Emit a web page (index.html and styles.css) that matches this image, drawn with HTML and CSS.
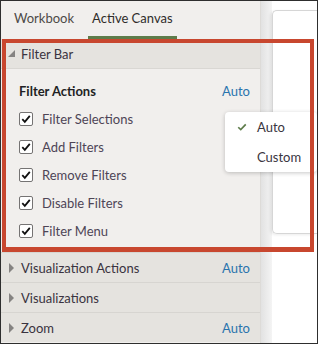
FILE: index.html
```html
<!DOCTYPE html>
<html lang="en">
<head>
  <meta charset="UTF-8" />
  <title>Canvas Properties</title>
  <link rel="stylesheet" href="styles.css">
</head>
<body>
  <div class="frame">
    <aside class="panel">
      <nav class="tabs">
        <span class="tab">Workbook</span>
        <span class="tab active">Active Canvas</span>
      </nav>

      <section class="group">
        <header class="group-head open"><span class="caret"></span>Filter Bar</header>
        <div class="group-body">
          <div class="prop">
            <span class="prop-name">Filter Actions</span>
            <span class="value">Auto</span>
          </div>
          <label class="check"><span class="box"><svg viewBox="0 0 12 12"><path d="M2.3 6.2 L4.8 8.8 L9.8 2.8" /></svg></span>Filter Selections</label>
          <label class="check"><span class="box"><svg viewBox="0 0 12 12"><path d="M2.3 6.2 L4.8 8.8 L9.8 2.8" /></svg></span>Add Filters</label>
          <label class="check"><span class="box"><svg viewBox="0 0 12 12"><path d="M2.3 6.2 L4.8 8.8 L9.8 2.8" /></svg></span>Remove Filters</label>
          <label class="check"><span class="box"><svg viewBox="0 0 12 12"><path d="M2.3 6.2 L4.8 8.8 L9.8 2.8" /></svg></span>Disable Filters</label>
          <label class="check"><span class="box"><svg viewBox="0 0 12 12"><path d="M2.3 6.2 L4.8 8.8 L9.8 2.8" /></svg></span>Filter Menu</label>
        </div>
      </section>

      <section class="group">
        <header class="group-head"><span class="caret"></span>Visualization Actions<span class="value">Auto</span></header>
      </section>
      <section class="group">
        <header class="group-head"><span class="caret"></span>Visualizations</header>
      </section>
      <section class="group">
        <header class="group-head"><span class="caret"></span>Zoom<span class="value">Auto</span></header>
      </section>
    </aside>

    <div class="gutter"></div>
    <main class="canvas">
      <div class="card"></div>
    </main>

    <ul class="menu">
      <li class="selected"><svg class="tick" viewBox="0 0 12 12"><path d="M1.5 6.3 L4.5 9.2 L10.5 2.8" /></svg>Auto</li>
      <li>Custom</li>
    </ul>

    <div class="callout"></div>
  </div>
</body>
</html>
```

FILE: styles.css
```css
* {
  box-sizing: border-box;
  margin: 0;
  padding: 0;
}
body {
  font-family: Lato, 'Liberation Sans', sans-serif;
  font-size: 13px;
  background: #fff;
}
.frame {
  position: relative;
  width: 318px;
  height: 344px;
  border: 1px solid #2e2e2e;
  display: flex;
  overflow: hidden;
}
.panel {
  width: 260px;
  flex: none;
  background: #f1efed;
  border-right: 1px solid #dddbd8;
  display: flex;
  flex-direction: column;
}
.tabs {
  height: 38px;
  display: flex;
  gap: 10px;
  padding-left: 9px;
}
.tab {
  padding: 0 4px;
  line-height: 35px;
  color: #4d4a47;
  border-bottom: 3px solid transparent;
}
.tab.active {
  color: #2f2c2a;
  border-bottom-color: #5e7c4b;
}
.group-head {
  height: 30px;
  display: flex;
  align-items: center;
  padding: 0 10px 0 20px;
  background: #e5e3df;
  border-top: 1px solid #d7d5d1;
  color: #3a3340;
  position: relative;
}
.group-head.open {
  border-top: none;
  border-bottom: 1px solid #d9d7d3;
}
.caret {
  position: absolute;
  left: 8px;
  top: 10px;
  width: 0;
  height: 0;
  border-top: 5px solid transparent;
  border-bottom: 5px solid transparent;
  border-left: 5px solid #858382;
}
.open .caret {
  left: 7px;
  top: 11px;
  border-top: none;
  border-left: 7px solid transparent;
  border-bottom: 7px solid #858382;
}
.value {
  margin-left: auto;
  color: #2a74ad;
}
.group-body {
  padding: 8px 10px 7px 17px;
}
.prop {
  height: 28px;
  display: flex;
  align-items: center;
  padding-left: 1px;
}
.prop-name {
  font-weight: bold;
  color: #221f24;
}
.check {
  height: 28px;
  display: flex;
  align-items: center;
  gap: 9px;
  padding-left: 1px;
  color: #4e4556;
}
.box {
  width: 14px;
  height: 14px;
  border: 1px solid #757373;
  border-radius: 2px;
  background: #fff;
  display: flex;
}
.box svg {
  width: 12px;
  height: 12px;
}
.box path {
  fill: none;
  stroke: #111;
  stroke-width: 1.8;
}
.gutter {
  width: 11px;
  flex: none;
  background: linear-gradient(90deg, #e2e2e2, #f4f4f4);
}
.canvas {
  flex: 1;
  background: #fff;
  padding-top: 9px;
}
.card {
  height: 224px;
  border: 1px solid #d6d6d6;
  border-right: none;
  border-radius: 5px 0 0 5px;
  box-shadow: -2px 1px 3px rgba(0, 0, 0, 0.08);
}
.menu {
  position: absolute;
  left: 224px;
  top: 111px;
  width: 92px;
  list-style: none;
  background: #fff;
  border-radius: 4px;
  box-shadow: 0 1px 4px rgba(0, 0, 0, 0.22);
}
.menu li {
  height: 30px;
  display: flex;
  align-items: center;
  padding-left: 32px;
  position: relative;
  color: #3a3540;
}
.tick {
  position: absolute;
  left: 12px;
  top: 10px;
  width: 10px;
  height: 10px;
}
.tick path {
  fill: none;
  stroke: #5e7c4b;
  stroke-width: 2;
}
.callout {
  position: absolute;
  left: 1px;
  top: 38px;
  width: 312px;
  height: 213px;
  border: 4px solid #c8472f;
  border-bottom-width: 5px;
}
```
